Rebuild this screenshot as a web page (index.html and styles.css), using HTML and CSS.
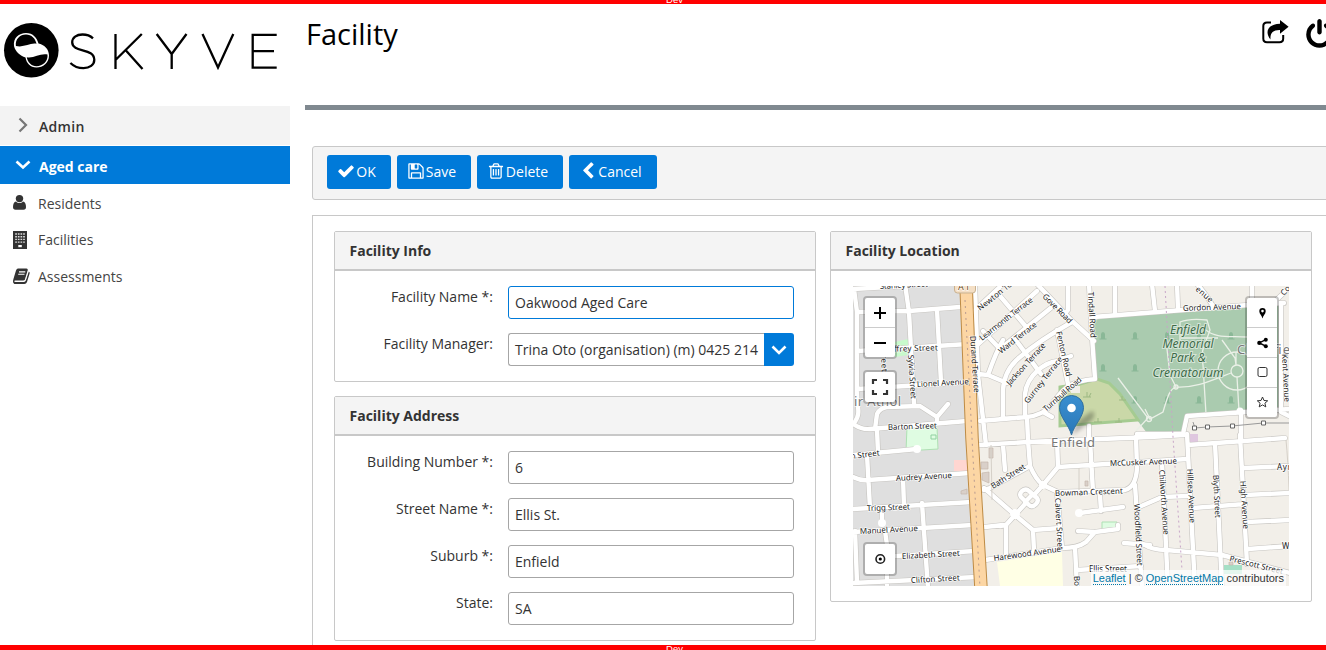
FILE: index.html
```html
<!DOCTYPE html>
<html lang="en">
<head>
<meta charset="utf-8">
<title>Facility</title>
<link rel="stylesheet" href="styles.css">
</head>
<body>
<div class="app">
  <div class="env env-top"><span>Dev</span></div>
  <div class="body">
    <aside class="sidebar">
      <div class="logo">
        <svg width="280" height="102" viewBox="0 4 280 102">
          <circle cx="31.300" cy="50.300" r="27.300" fill="#000"/>
          <path d="M14 46C13 38 19 33 26 33S37 38 38.500 43.500C44 44.500 49 49 49 55.500C49 63 43 67.500 36.500 67.500S26.500 63 25.500 57.500C20 55.500 15.500 52 14 46Z" fill="#fff"/>
          <path d="M15.900 45.900C15 39 20 34.400 26 34.400C31.500 34.400 35.500 38.500 36.500 43.800C30 42.500 24 48 15.900 45.900Z" fill="#000"/>
          <path d="M26.800 57.200C34 58.500 40 53 47.500 54.500C48.300 61.500 42.500 66.200 36.500 66.200C31.500 66.200 27.500 62 26.800 57.200Z" fill="#000"/>
          <g fill="none" stroke="#000" stroke-width="2.300">
            <path d="M93 38.300C90 35.500 86.500 34.500 82.500 34.500C76.500 34.500 72.200 37.500 72.200 42.300C72.200 53 94.300 47.500 94.300 59.800C94.300 65 89.500 68.200 83.500 68.200C78 68.200 74 66.500 70.400 63"/>
            <path d="M115.500 34V69M141.800 34L116 59.500M125.500 50L142.500 69"/>
            <path d="M156.700 34L171.700 54L186.500 34M171.700 53V69"/>
            <path d="M202.500 34L218 67.500L233.300 34"/>
            <path d="M276.700 34.800H252.700V67.700H276.700M252.700 51.200H274"/>
          </g>
        </svg>
      </div>
      <nav class="menu">
        <div class="group"><svg class="chev" width="16" height="16" viewBox="0 0 16 16"><path d="M4.500 1.500L11 8L4.500 14.500" fill="none" stroke="#777" stroke-width="2.200"/></svg>Admin</div>
        <div class="group open"><svg class="chev" width="16" height="16" viewBox="0 0 16 16"><path d="M1.500 4.500L8 10.500L14.500 4.500" fill="none" stroke="#fff" stroke-width="2.600"/></svg>Aged care</div>
        <div class="item"><svg width="20" height="20" viewBox="0 0 20 20" fill="#333"><circle cx="6.500" cy="5.600" r="3.700"/><path d="M3 8.500C4 9.600 5.200 10.100 6.500 10.100S9 9.600 10 8.500C12 8.700 13 11 13 14Q13 16.800 10.500 16.800H2.500Q0 16.800 0 14C0 11 1 8.700 3 8.500Z"/></svg>Residents</div>
        <div class="item"><svg width="20" height="20" viewBox="0 0 20 20"><path d="M0 1H14V19H0Z" fill="#333"/><path d="M2.200 4h10M2.200 6.700h10M2.200 9.400h10M2.200 12.100h10" stroke="#ddd" stroke-width="1.400" stroke-dasharray="1.700 .95"/><path d="M5.300 17.200v-2.200h3.500v2.200Z" fill="#fff"/></svg>Facilities</div>
        <div class="item"><svg width="20" height="20" viewBox="0 0 20 20"><path d="M5 2.500H13.500Q15.200 2.500 14.700 4.500L12 13.500Q11.500 14.500 10 14.500H2.300Q1.200 14.500 1.200 15.200Q1.400 15.900 2.500 15.900H11Q12.300 15.900 12.800 14.500L15.800 5.500Q17 6 16.600 7.500L14 16Q13.300 18 11.300 18H2.500Q0 18 0 15.200Q0 14.200 .5 12.700L3 4.500Q3.700 2.500 5 2.500Z" fill="#333"/><path d="M15.100 5L12.300 14.200" stroke="#fff" stroke-width=".6"/><path d="M6 5.900H12.300M5.200 8.300H11.500" stroke="#fff" stroke-width="1.100"/></svg>Assessments</div>
      </nav>
    </aside>
    <main class="main">
      <header class="head">
        <h1>Facility</h1>
        <div class="actions">
          <svg width="27" height="24" viewBox="0 0 27 24"><path d="M9 2.400H5Q1.300 2.400 1.300 6V18.500Q1.300 22.300 5 22.300H17.500Q21.200 22.300 21.200 18.500V15" fill="none" stroke="#000" stroke-width="2"/><path d="M18 0L26.600 6.700L18 13.700V10C11 9.800 8 13 8.500 19.500C2.500 12 5.500 4.100 18 3.700Z"/></svg>
          <svg class="power" width="31" height="31" viewBox="0 0 1792 1792"><path d="M1664 896q0 156-61 298t-164 245-245 164-298 61-298-61-245-164-164-245-61-298q0-182 80.500-343t226.500-270q43-32 95.500-25t83.500 50q32 42 24.500 94.500t-49.500 84.500q-98 74-151.500 181t-53.500 228q0 104 40.500 198.500t109.500 163.500 163.500 109.500 198.500 40.500 198.500-40.500 163.500-109.500 109.500-163.500 40.500-198.500q0-121-53.500-228t-151.500-181q-42-32-49.500-84.500t24.500-94.500q31-43 84-50t95 25q146 109 226.500 270t80.500 343zm-640-768v640q0 52-38 90t-90 38-90-38-38-90v-640q0-52 38-90t90-38 90 38 38 90z"/></svg>
        </div>
      </header>
      <div class="toolbar">
        <button class="btn b-ok"><svg width="18" height="18" viewBox="0 0 1792 1792"><path d="M1671 566q0 40-28 68l-724 724-136 136q-28 28-68 28t-68-28l-136-136-362-362q-28-28-28-68t28-68l136-136q28-28 68-28t68 28l294 295 656-657q28-28 68-28t68 28l136 136q28 28 28 68z"/></svg>OK</button>
        <button class="btn b-save"><svg width="18" height="18" viewBox="0 0 1792 1792"><path d="M512 1536h768v-384h-768v384zm896 0h128v-896q0-14-10-38.500t-20-34.500l-281-281q-10-10-34-20t-39-10v416q0 40-28 68t-68 28h-576q-40 0-68-28t-28-68v-416h-128v1280h128v-416q0-40 28-68t68-28h832q40 0 68 28t28 68v416zm-384-928v-320q0-13-9.500-22.500t-22.500-9.500h-192q-13 0-22.500 9.500t-9.500 22.500v320q0 13 9.500 22.500t22.500 9.500h192q13 0 22.500-9.500t9.500-22.500zm640 32v928q0 40-28 68t-68 28h-1344q-40 0-68-28t-28-68v-1344q0-40 28-68t68-28h928q40 0 88 20t76 48l280 280q28 28 48 76t20 88z"/></svg>Save</button>
        <button class="btn b-del"><svg width="18" height="18" viewBox="0 0 1792 1792"><path d="M704 736v576q0 14-9 23t-23 9h-64q-14 0-23-9t-9-23v-576q0-14 9-23t23-9h64q14 0 23 9t9 23zm256 0v576q0 14-9 23t-23 9h-64q-14 0-23-9t-9-23v-576q0-14 9-23t23-9h64q14 0 23 9t9 23zm256 0v576q0 14-9 23t-23 9h-64q-14 0-23-9t-9-23v-576q0-14 9-23t23-9h64q14 0 23 9t9 23zm128 724v-948h-896v948q0 22 7 40.500t14.500 27 10.500 8.500h832q3 0 10.500-8.500t14.500-27 7-40.500zm-672-1076h448l-48-117q-7-9-17-11h-317q-10 2-17 11zm928 32v64q0 14-9 23t-23 9h-96v948q0 83-47 143.500t-113 60.500h-832q-66 0-113-58.500t-47-141.500v-952h-96q-14 0-23-9t-9-23v-64q0-14 9-23t23-9h309l70-167q15-37 54-63t79-26h320q40 0 79 26t54 63l70 167h309q14 0 23 9t9 23z"/></svg>Delete</button>
        <button class="btn b-can"><svg width="18" height="18" viewBox="0 0 1792 1792"><path d="M1427 301l-531 531 531 531q19 19 19 45t-19 45l-166 166q-19 19-45 19t-45-19l-742-742q-19-19-19-45t19-45l742-742q19-19 45-19t45 19l166 166q19 19 19 45t-19 45z"/></svg>Cancel</button>
      </div>
      <div class="content">
        <div class="col">
          <section class="card">
            <h2>Facility Info</h2>
            <div class="fields">
              <div class="row"><label>Facility Name *:</label><div class="input focus">Oakwood Aged Care</div></div>
              <div class="row"><label>Facility Manager:</label><div class="combo"><div class="input">Trina Oto (organisation) (m) 0425 214</div><div class="drop"><svg width="16" height="16" viewBox="0 0 16 16"><path d="M1.500 4.500L8 11L14.500 4.500" fill="none" stroke="#fff" stroke-width="2.600"/></svg></div></div></div>
            </div>
          </section>
          <section class="card">
            <h2>Facility Address</h2>
            <div class="fields">
              <div class="row"><label>Building Number *:</label><div class="input">6</div></div>
              <div class="row"><label>Street Name *:</label><div class="input">Ellis St.</div></div>
              <div class="row"><label>Suburb *:</label><div class="input">Enfield</div></div>
              <div class="row"><label>State:</label><div class="input">SA</div></div>
            </div>
          </section>
        </div>
        <div class="col">
          <section class="card">
            <h2>Facility Location</h2>
            <div class="mapwrap">
              <div class="map">
                <svg class="tiles" width="436" height="300" viewBox="853 286 436 300">
                  <defs>
                    <path id="tree" d="M-3.500 3.500H3.500V2.500H2V-1.500Q2-4 0-4T-2-1.500V2.500H-3.500Z"/>
                    <linearGradient id="pin" x2="0" y2="1"><stop offset="0" stop-color="#3a8fd0"/><stop offset="1" stop-color="#2a78b8"/></linearGradient>
                    <filter id="soft"><feGaussianBlur stdDeviation="2"/></filter>
                    <g id="roads">
                      <path d="M853 289L905 286M857 312L909 311L960 307M905 284L909 312L914 404M937 310L941 382M854 289L857 312V394C857 405 862 415 853 424M857 351L968 344M857 389L970 382M853 424Q862 430 870 429L967 421M875 429L877 414Q880 408 887 407L920 406L937 417L948 404M937 416V423"/>
                      <path d="M877 430L878 452M853 455L917 449M867 455L870 508M853 477Q861 481 868 480L970 473M903 478L904 506M853 509L972 502M882 508V523M853 532L973 525M885 531L887 545M922 503L928 588M855 531L857 582M895 556L975 551M853 583L977 577M887 575V588"/>
                      <path d="M975 286L978 375L986 445M973 312L1003 284M975 347L1037 291M978 374L988 375Q996 352 1003 340M988 375L1007 383M980 421L1027 417M983 331L1000 349M1000 296L1028 329M1015 339L1041 374M1037 284L1072 321L1094 341M1068 284V310L1064 315M1000 349L1052 307M1003 418V390Q1004 370 1020 357Q1040 340 1072 322M1025 417V394C1027 375 1045 362 1058 361L1071 356M1057 330L1068 384M1000 419L1027 417Q1043 415 1050 406C1062 392 1066 381 1095 379M1089 284L1092 337L1095 379M1093 317L1248 305L1284 303M1115 284V314M1043 412L1052 417M1027 417L1028 440"/>
                      <path d="M1152 284L1155 311M1177 284L1178 309M1197 284Q1206 294 1213 306M1252 284V305M1270 306L1290 287M1281 304V412L1289 416M1137 434L1183 434L1187 416L1290 409M1241 412V440M1089 426V440"/>
                      <path d="M979 445L1028 442L1150 437L1184 435M1028 440L1030 466Q1036 480 1043 485L1058 492L1125 490Q1136 487 1137 468L1136 437M1057 440L1058 467L1043 485L1034 495M1025 504L1015 515L1006 525V555M1058 467L1187 459M984 490L990 488L1030 466M984 488L1015 515L1033 530L1060 528M1033 530L1034 551M1000 526L1006 525M1090 440L1093 492M1100 495L1101 511M1080 513L1101 510L1123 507M1078 531L1095 532L1118 529V525M1095 532L1086 542Q1078 548 1062 548M1057 492L1062 548M985 560L1063 548M1075 547L1077 588M1077 570L1141 566M1135 485L1142 588M1124 543L1150 545M1139 507L1162 497L1188 496M1003 445L1005 470M985 527L1003 525"/>
                      <path d="M1187 434L1195 588M1215 443L1222 588M1240 435L1247 564M1162 462L1168 588M1188 445L1285 438M1244 468L1290 466M1245 495L1290 493M1247 522L1290 520M1248 549L1290 546M1193 508L1245 504M1143 544Q1152 550 1166 550L1222 555L1290 573"/>
                      <path d="M1021 497Q1019 494 1022 491Q1026 488 1029 491L1037 498Q1039 501 1036 504Q1032 508 1029 505ZM1025 502L1033 494"/>
                    </g>
                  </defs>
                  <rect x="853" y="286" width="436" height="300" fill="#f2efe9"/>
                  <path d="M853 286H966L981 586H853Z" fill="#dfdfdf"/>
                  <path d="M1093 322L1103 316L1281 305V411L1187 417L1183 431L1147 433L1137 420L1095 379Z" fill="#aacbaf"/>
                  <path d="M1060 387L1080 384L1097 379L1109 383L1120 394L1138 420L1060 426Z" fill="#cad8a8" stroke="#a5cb91" stroke-width="3"/>
                  <path d="M1070 386H1080V393H1071Z" fill="#f2efe9"/>
                  <path d="M907 427H937L938 449L906 451ZM1102 522H1117V531H1102Z" fill="#dffce2" stroke="#aee0b3"/>
                  <path d="M931 435h5v4h-5Z" fill="#dffce2" stroke="#8fd0a0"/>
                  <path d="M895 342L908 339V355L895 357Z" fill="#c8facc"/>
                  <rect x="954" y="460" width="14" height="11" fill="#ffd6d1"/>
                  <path d="M997 562L1062 552L1063 586H1000Z" fill="#ffffe5"/>
                  <path d="M1190 434H1198V444H1189Z" fill="#dfc7df"/><path d="M1224 565H1242V574H1224Z" fill="#a5dfc5"/>
                  <path d="M981 462h7v7h-7ZM982 473l7-1v11l-7-3ZM989 448h4v10h-4ZM961 491l6-2v5h-6ZM1085 481h3v5h-3ZM1229 562h4v3h-4Z" fill="#d9d0c9" stroke="#c6b8ac" stroke-width=".7"/>
                  <g fill="#8ab897"><use href="#tree" x="1103" y="336"/><use href="#tree" x="1135" y="336"/><use href="#tree" x="1103" y="368"/><use href="#tree" x="1135" y="368"/><use href="#tree" x="1135" y="400"/><use href="#tree" x="1167" y="336"/><use href="#tree" x="1199" y="336"/><use href="#tree" x="1231" y="336"/><use href="#tree" x="1167" y="400"/><use href="#tree" x="1199" y="400"/><use href="#tree" x="1231" y="400"/></g>
                  <path d="M1083 397h8m-4 0v-5m2 5l2-4M1094 422h8m-4 0v-4M1119 400h7m-4 0v-4M1115 422h7m-3 0v-4" fill="none" stroke="#9cb882"/>
                  <g fill="none" stroke="#eaf0e7" stroke-width="1.300">
                    <path d="M1118 378L1148 418L1136 431M1145 409L1150 419L1163 412C1168 395 1170 389 1176 387L1170 375L1167 349M1176 387C1195 388 1208 382 1231 373M1180 340V322Q1190 318 1207 320L1210 330C1205 345 1200 350 1203 365L1206 414M1181 338L1218 338M1206 330C1215 338 1227 336 1247 337M1222 340L1235 358L1236 365L1236 352M1237 377L1239 411"/>
                    <circle cx="1237" cy="371" r="6"/><circle cx="1237" cy="371" r="19"/><circle cx="1149" cy="419" r="2.500"/><circle cx="1176" cy="387" r="2"/>
                  </g>
                  <g fill="none" stroke-linejoin="round" stroke-linecap="round"><use href="#roads" stroke="#c7c5c1" stroke-width="5.600"/><use href="#roads" stroke="#fff" stroke-width="4.400"/></g>
                  <g fill="#fff"><circle cx="917" cy="449" r="4"/><circle cx="882" cy="523" r="4"/><circle cx="1079" cy="513" r="4"/><circle cx="1240" cy="411" r="3.500"/><circle cx="1043" cy="485" r="4"/><circle cx="1015" cy="514" r="5"/></g>
                  <g fill="none"><path d="M966 284L972 438L981 588" stroke="#bd8b45" stroke-width="13.500"/><path d="M966 284L972 438L981 588" stroke="#fcd6a4" stroke-width="11.500"/><path d="M965 300L972 438L980 588" stroke="#b99b90" stroke-dasharray="2 4"/>
                  <path d="M1165 286L1173 437L1182 570" stroke="#c8a5c8" stroke-dasharray="2 3"/>
                  <path d="M991 445L992 500M1079 468V490M1286 440Q1288 460 1289 490" stroke="#d5d0c8"/></g>
                  <path d="M1193 422L1195 428L1207 427L1232 426L1263 423H1289" fill="none" stroke="#999"/><path d="M1192.500 426h4v4h-4ZM1205.500 425h4v4h-4ZM1230.500 424h4v4h-4ZM1261.500 421h4v4h-4Z" fill="#fff" stroke="#666"/>
                  <rect x="954.500" y="279" width="21" height="14" rx="3" fill="#f4dfc5" stroke="#c9b18f"/>
                  <g class="lbl">
                    <text x="958" y="290" class="ref" textLength="12">A1</text>
                    <text x="880" y="289" textLength="48" transform="rotate(-3 880 289)">Stanley Street</text>
                    <text x="889" y="352" textLength="49" transform="rotate(-2 889 352)">affrey Street</text>
                    <text x="917" y="387" textLength="52" transform="rotate(-3 917 387)">Lionel Avenue</text>
                    <text x="888" y="430" textLength="49" transform="rotate(-2 888 430)">Barton Street</text>
                    <text x="851" y="459" textLength="29" transform="rotate(-7 851 459)">h Street</text>
                    <text x="896" y="481" textLength="56" transform="rotate(-3 896 481)">Audrey Avenue</text>
                    <text x="867" y="511" textLength="43" transform="rotate(-2 867 511)">Trigg Street</text>
                    <text x="860" y="534" textLength="58" transform="rotate(-3 860 534)">Manuel Avenue</text>
                    <text x="902" y="559" textLength="58" transform="rotate(-3 902 559)">Elizabeth Street</text>
                    <text x="911" y="583" textLength="49" transform="rotate(-3 911 583)">Clifton Street</text>
                    <text x="908" y="355" textLength="44" transform="rotate(86 908 355)">Sylvia Street</text>
                    <text x="881" y="351" textLength="21" transform="rotate(88 881 351)">treet</text>
                    <text x="970" y="336" textLength="57" transform="rotate(86 970 336)">Durand Terrace</text>
                    <text x="980" y="311" textLength="41" transform="rotate(-38 980 311)">Newton Te</text>
                    <text x="982" y="341" textLength="65" transform="rotate(-38 982 341)">Learmonth Terrace</text>
                    <text x="1001" y="354" textLength="46" transform="rotate(-38 1001 354)">Ward Terrace</text>
                    <text x="1010" y="386" textLength="54" transform="rotate(-48 1010 386)">Jackson Terrace</text>
                    <text x="1028" y="404" textLength="57" transform="rotate(-52 1028 404)">Gurney Terrace</text>
                    <text x="1042" y="297" textLength="38" transform="rotate(45 1042 297)">Gove Road</text>
                    <text x="1056" y="332" textLength="46" transform="rotate(77 1056 332)">Fenton Road</text>
                    <text x="1088" y="292" textLength="46" transform="rotate(87 1088 292)">Tindall Road</text>
                    <text x="1046" y="412" textLength="48" transform="rotate(-41 1046 412)">Turnbull Road</text>
                    <text x="1183" y="311" textLength="58" transform="rotate(-2 1183 311)">Gordon Avenue</text>
                    <text x="1195" y="290" textLength="20" transform="rotate(40 1195 290)">enue</text>
                    <text x="1284" y="296" textLength="12" transform="rotate(-48 1284 296)">Col</text>
                    <text x="1282" y="354" textLength="48" transform="rotate(87 1282 354)">Kent Avenue</text>
                    <text x="993" y="489" textLength="39" transform="rotate(-32 993 489)">Bath Street</text>
                    <text x="1110" y="466" textLength="67" transform="rotate(-2 1110 466)">McCusker Avenue</text>
                    <text x="1055" y="496" textLength="68" transform="rotate(-2 1055 496)">Bowman Crescent</text>
                    <text x="1055" y="498" textLength="52" transform="rotate(87 1055 498)">Calvert Street</text>
                    <text x="994" y="561" textLength="68" transform="rotate(-8 994 561)">Harewood Avenue</text>
                    <text x="1134" y="504" textLength="62" transform="rotate(87 1134 504)">Woodfield Street</text>
                    <text x="1159" y="470" textLength="65" transform="rotate(86 1159 470)">Chilworth Avenue</text>
                    <text x="1187" y="469" textLength="54" transform="rotate(87 1187 469)">Hillsea Avenue</text>
                    <text x="1213" y="475" textLength="43" transform="rotate(87 1213 475)">Blyth Street</text>
                    <text x="1240" y="481" textLength="48" transform="rotate(86 1240 481)">High Avenue</text>
                    <text x="1089" y="572" textLength="38">Ellis Street</text>
                    <text x="1074" y="576" textLength="12" transform="rotate(88 1074 576)">Bol</text>
                    <text x="1277" y="470" textLength="14">Ayr</text><text x="1282" y="549">W</text>
                    <text x="1229" y="561" textLength="55" transform="rotate(14 1229 561)">Prescott Street</text>
                    <g class="suburb"><text x="854" y="406" textLength="47">ir Athol</text><text x="1051" y="447" textLength="44">Enfield</text><text x="1237" y="354" textLength="53">Clearfie</text></g>
                    <g class="park"><text x="1188" y="333.500">Enfield</text><text x="1188" y="347.500">Memorial</text><text x="1188" y="362">Park &amp;</text><text x="1188" y="376.500">Crematorium</text></g>
                  </g>
                  <path d="M1072 435L1078 421L1092 411Q1097 414 1091 421Z" fill="#000" opacity=".28" filter="url(#soft)"/>
                  <path d="M1071.500 435C1069 425 1059.500 417 1059.500 407.500A12 12 0 0 1 1083.500 407.500C1083.500 417 1074 425 1071.500 435Z" fill="url(#pin)" stroke="#2f6f9f"/>
                  <circle cx="1071.500" cy="408" r="4.300" fill="#fff"/>
                </svg>
                <div class="ctl zoomctl"><div><svg width="30" height="30"><path d="M9 15H21M15 9V21" stroke="#000" stroke-width="2"/></svg></div><div><svg width="30" height="30"><path d="M9 15H21" stroke="#000" stroke-width="2"/></svg></div></div>
                <div class="ctl fullctl"><svg width="30" height="30"><path d="M8 12V8H12M18 8H22V12M22 18V22H18M12 22H8V18" fill="none" stroke="#333" stroke-width="2.200"/></svg></div>
                <div class="ctl locctl"><svg width="30" height="30"><circle cx="15.300" cy="15" r="4.300" fill="none" stroke="#222" stroke-width="1.600"/><circle cx="15.300" cy="15" r="1.600"/></svg></div>
                <div class="ctl sidectl">
                  <div><svg width="30" height="30"><path fill-rule="evenodd" d="M15.500 20.500C15 17.500 12.300 16 12.300 13.200A3.200 3.200 0 0 1 18.700 13.200C18.700 16 16 17.500 15.500 20.500ZM15.500 11.800A1.300 1.300 0 1 0 15.500 14.400A1.300 1.300 0 1 0 15.500 11.800Z"/></svg></div>
                  <div><svg width="30" height="30"><path d="M18.800 11.700L12.200 14.900L18.800 18.200" fill="none" stroke="#000" stroke-width="1.400"/><circle cx="18.800" cy="11.700" r="2"/><circle cx="12.300" cy="14.900" r="2.100"/><circle cx="18.800" cy="18.200" r="2"/></svg></div>
                  <div><svg width="30" height="30"><rect x="11" y="9.500" width="9" height="9" rx="1.500" fill="none" stroke="#333"/></svg></div>
                  <div><svg width="30" height="30"><path d="M15.500 9L17 12.500L20.700 12.800L17.900 15.200L18.800 18.900L15.500 16.900L12.200 18.900L13.100 15.200L10.300 12.800L14 12.500Z" fill="none" stroke="#333"/></svg></div>
                </div>
                <div class="attrib"><a>Leaflet</a> | © <a>OpenStreetMap</a> contributors</div>
              </div>
            </div>
          </section>
        </div>
      </div>
    </main>
  </div>
  <div class="env env-bottom"><span>Dev</span></div>
</div>
</body>
</html>
```
FILE: styles.css
```css
* { box-sizing: border-box; }
body { margin: 0; background: #fff; color: #333; font: 14px/19px "Open Sans", sans-serif; }
svg { display: block; flex: none; }
.app { height: 650px; width: 1326px; overflow: hidden; display: flex; flex-direction: column; }
.env { background: #f00; color: #fff; overflow: hidden; flex: none; display: flex; justify-content: center; padding-left: 23px; font: 9.500px/11px "Liberation Sans", sans-serif; }
.env-top { height: 4px; align-items: flex-end; }
.env-top span { margin-bottom: -1px; }
.env-bottom { height: 5px; align-items: flex-start; }
.env-bottom span { margin-top: -2px; }
.body { flex: 1; min-height: 0; display: flex; overflow: hidden; }
.sidebar { width: 290px; flex: none; }
.logo { height: 102px; }
.group { display: flex; align-items: center; height: 39px; margin-bottom: 1px; padding: 2px 0 0 15px; gap: 8px; background: #f3f3f3; font-weight: 600; letter-spacing: .3px; }
.group .chev { margin-top: -4px; }
.group.open { height: 38px; background: #007ad9; color: #fff; font-weight: 700; margin-bottom: 1px; padding-top: 2px; letter-spacing: 0; }
.group.open .chev { margin-top: -2px; }
.item { display: flex; align-items: center; height: 36.500px; padding-left: 13px; gap: 5px; color: #444; }
.main { width: 1021px; margin-left: 15px; flex: none; overflow: hidden; }
.head { height: 106px; border-bottom: 5px solid #808990; display: flex; justify-content: space-between; padding-top: 10px; }
h1 { margin: 0 0 0 1px; font-size: 29px; line-height: 40px; font-weight: 400; color: #000; }
.actions { display: flex; gap: 15px; padding-top: 6px; margin-right: -9px; }
.actions .power { margin-top: -1px; }
.toolbar { margin: 36px 0 0 7px; width: 1030px; height: 54px; border: 1px solid #c8c8c8; border-radius: 3px; background: #f4f4f4; padding: 8px 14px; display: flex; gap: 6px; }
.btn { height: 34px; border: 0; border-radius: 3px; background: #007ad9; color: #fff; font: 14px/19px "Open Sans", sans-serif; padding: 0 5px 2px 0; display: flex; align-items: center; justify-content: center; gap: 1px; }
.btn svg { fill: #fff; }
.b-ok { width: 64px; }
.b-save { width: 74px; }
.b-del { width: 86px; }
.b-can { width: 88px; }
.content { margin: 15px 0 0 7px; width: 1030px; height: 500px; border: 1px solid #c8c8c8; padding: 15px 0 0 21px; display: flex; gap: 14px; align-items: flex-start; }
.col { width: 482px; flex: none; display: flex; flex-direction: column; gap: 14px; }
.card { border: 1px solid #c8c8c8; border-radius: 2px; }
h2 { margin: 0; height: 39px; padding: 9px 14.500px; background: #f4f4f4; border-bottom: 2px solid #c8c8c8; font-size: 14px; line-height: 19px; font-weight: 700; }
.fields { padding: 15px 21px 15px 0; display: flex; flex-direction: column; gap: 14px; }
.row { display: flex; justify-content: space-between; height: 33px; }
.row label { width: 158px; text-align: right; padding-top: 1px; }
.input { width: 286px; height: 33px; border: 1px solid #a6a6a6; border-radius: 3px; padding: 6px; white-space: nowrap; overflow: hidden; }
.input.focus { border-color: #007ad9; }
.combo { display: flex; width: 286px; }
.combo .input { width: 256px; border-right: 0; border-radius: 3px 0 0 3px; }
.drop { width: 30px; height: 33px; background: #007ad9; border-radius: 0 3px 3px 0; display: flex; align-items: center; justify-content: center; }
.mapwrap { padding: 15px 22px 15px; }
.map { position: relative; width: 436px; height: 300px; overflow: hidden; }
.ctl { position: absolute; width: 34px; border: 2px solid rgba(0,0,0,.22); border-radius: 4px; background: #fff; background-clip: padding-box; }
.ctl div + div { border-top: 1px solid #ccc; }
.ctl div svg { height: 29px; }
.ctl svg { width: 30px; }
.zoomctl { left: 10px; top: 10px; }
.fullctl { left: 10px; top: 84px; }
.locctl { left: 10px; top: 256px; }
.sidectl { right: 10px; top: 10px; }
.attrib { position: absolute; right: 3px; bottom: 0; height: 16px; padding: 0 2px; background: rgba(255,255,255,.7); font: 11px/17px "Liberation Sans", sans-serif; white-space: nowrap; }
.attrib a { color: #0078a8; border-bottom: 1px dotted #0078a8; }
.lbl { font: 8px "Noto Sans", sans-serif; fill: #222; paint-order: stroke; stroke: rgba(255,255,255,.75); stroke-width: 1.500px; }
.ref { font-size: 9px; fill: #6b4a1e; }
.suburb { font-size: 13px; fill: #777; }
.park { font-size: 12px; font-style: italic; fill: #3d6b49; text-anchor: middle; stroke: #d5e5d7; stroke-width: 2px; }
```
